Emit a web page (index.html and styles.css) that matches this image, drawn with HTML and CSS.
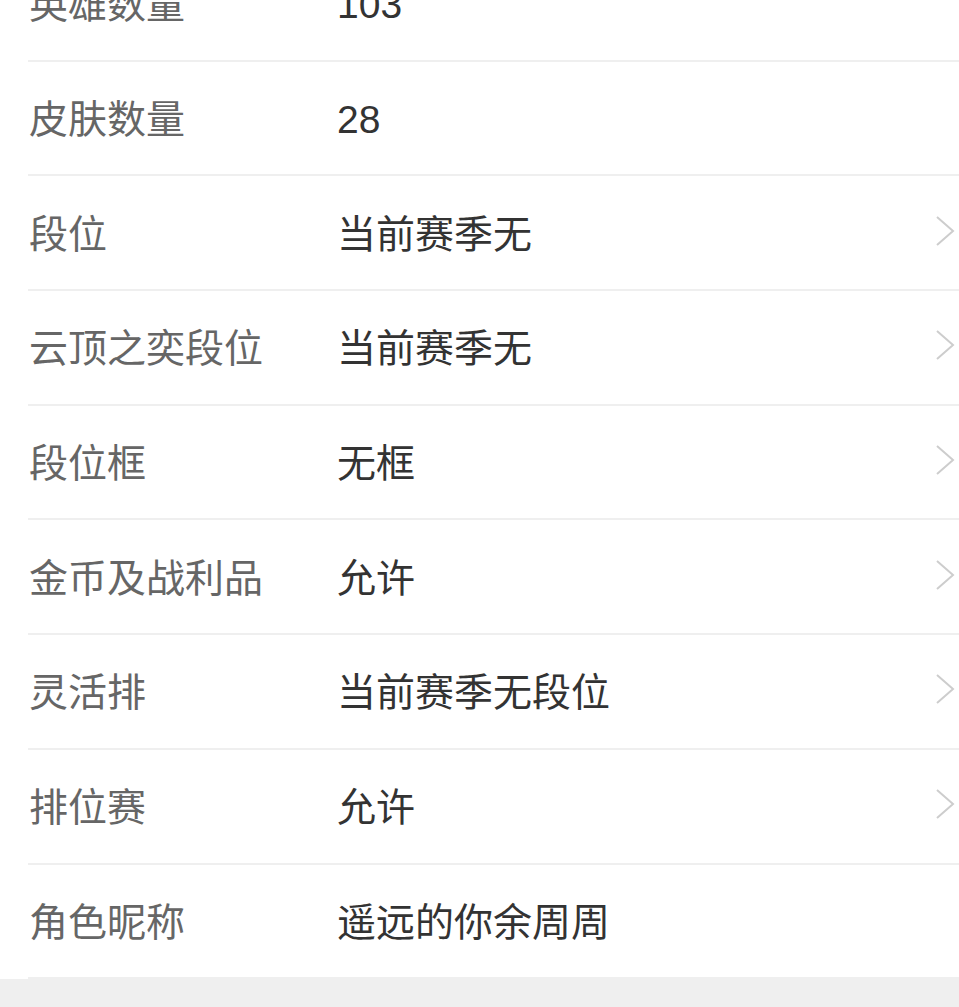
FILE: index.html
```html
<!DOCTYPE html>
<html lang="zh-CN">
<head>
    <meta charset="UTF-8">
    <meta name="viewport" content="width=device-width, initial-scale=1.0">
    <title>账号信息</title>
    <link rel="stylesheet" href="styles.css">
</head>
<body>
    <div class="info-list">
        <div class="info-row">
            <span class="info-label">英雄数量</span>
            <span class="info-value num">103</span>
        </div>
        <div class="info-row">
            <span class="info-label">皮肤数量</span>
            <span class="info-value num">28</span>
        </div>
        <div class="info-row link">
            <span class="info-label">段位</span>
            <span class="info-value">当前赛季无</span>
            <svg class="arrow" viewBox="0 0 20 32"><polyline points="2,2 18,16 2,30"/></svg>
        </div>
        <div class="info-row link">
            <span class="info-label">云顶之奕段位</span>
            <span class="info-value">当前赛季无</span>
            <svg class="arrow" viewBox="0 0 20 32"><polyline points="2,2 18,16 2,30"/></svg>
        </div>
        <div class="info-row link">
            <span class="info-label">段位框</span>
            <span class="info-value">无框</span>
            <svg class="arrow" viewBox="0 0 20 32"><polyline points="2,2 18,16 2,30"/></svg>
        </div>
        <div class="info-row link">
            <span class="info-label">金币及战利品</span>
            <span class="info-value">允许</span>
            <svg class="arrow" viewBox="0 0 20 32"><polyline points="2,2 18,16 2,30"/></svg>
        </div>
        <div class="info-row link">
            <span class="info-label">灵活排</span>
            <span class="info-value">当前赛季无段位</span>
            <svg class="arrow" viewBox="0 0 20 32"><polyline points="2,2 18,16 2,30"/></svg>
        </div>
        <div class="info-row link">
            <span class="info-label">排位赛</span>
            <span class="info-value">允许</span>
            <svg class="arrow" viewBox="0 0 20 32"><polyline points="2,2 18,16 2,30"/></svg>
        </div>
        <div class="info-row">
            <span class="info-label">角色昵称</span>
            <span class="info-value">遥远的你余周周</span>
        </div>
    </div>
    <div class="footer-space"></div>
</body>
</html>
```

FILE: styles.css
```css
* {
    margin: 0;
    padding: 0;
    box-sizing: border-box;
}

body {
    background: #fff;
    font-family: 'Liberation Sans', 'Noto Sans CJK SC', sans-serif;
    overflow: hidden;
}

/* list is scrolled so the first row is half hidden */
.info-list {
    margin-top: -53px;
    padding-left: 28px;
    background: #fff;
}

.info-row {
    display: flex;
    align-items: center;
    height: 114.7px;
    padding-right: 4px;
    padding-bottom: 4px;
    border-bottom: 2px solid #efefef;
    font-size: 39px;
}

.info-label {
    width: 309px;
    flex-shrink: 0;
    color: #666;
    padding-left: 1px;
}

.info-value {
    flex: 1;
    color: #333;
}

/* latin digits sit a bit high next to the CJK labels */
.info-value.num {
    padding-top: 8px;
}

.arrow {
    width: 20px;
    height: 32px;
    fill: none;
    stroke: #cdcdcd;
    stroke-width: 2;
}

.footer-space {
    height: 60px;
    background: #efefef;
}
```
